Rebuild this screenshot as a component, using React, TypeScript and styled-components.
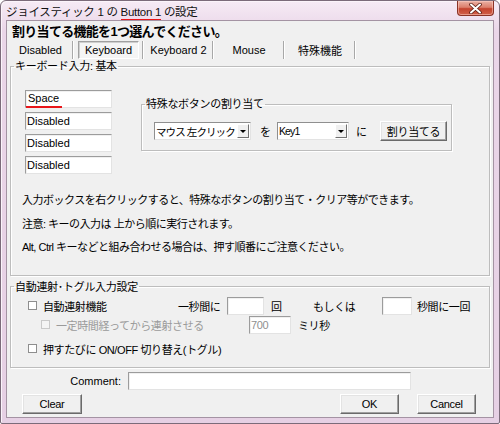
import React from 'react';
import styled, {createGlobalStyle} from 'styled-components';

const Global = createGlobalStyle`
  html, body { margin: 0; padding: 0; background: #fff; }
  body {
    font-family: "Liberation Sans", "Noto Sans CJK JP", sans-serif;
    font-size: 11px;
    color: #000;
  }
  * { box-sizing: border-box; }
`;

const Window = styled.div`
  width: 500px;
  height: 424px;
  display: flex;
  flex-direction: column;
  background: linear-gradient(#f6ebf5, #ead6e8 30px, #e6d0e4);
  border: 1px solid #7b6b7a;
  border-radius: 6px 6px 2px 2px;
  box-shadow: inset 1px 1px #fbf4fa;
`;

const TitleBar = styled.div`
  height: 19px;
  display: flex;
  align-items: flex-start;
  padding-left: 5px;
`;

const Title = styled.div`
  padding-top: 4px;
  font-size: 11.5px;
  line-height: 14px;
  letter-spacing: -0.3px;
  color: #111;
`;

const Mark = styled.span`
  border-bottom: 2px solid #e8161a;
  padding-bottom: 1px;
`;

const CloseBtn = styled.div`
  margin-left: auto;
  margin-right: 5px;
  width: 37px;
  height: 15px;
  display: flex;
  align-items: center;
  justify-content: center;
  border: 1px solid #8a3226;
  border-top: none;
  border-radius: 0 0 4px 4px;
  background: linear-gradient(#eab1a4, #dc7f6c 45%, #c4432e 55%, #d1604a);
  box-shadow: inset 0 0 0 1px rgba(255, 210, 200, 0.5);
`;

const Client = styled.div`
  flex: 1;
  margin: 0 5px 5px 5px;
  background: #f0f0f0;
  border: 1px solid #a493a3;
  padding: 0 3px;
  display: flex;
  flex-direction: column;
`;

const Heading = styled.div`
  margin: 1px 0 0 2px;
  height: 19px;
  line-height: 19px;
  font-size: 13px;
  font-weight: 700;
  letter-spacing: -0.7px;
`;

const TabBar = styled.div`
  display: flex;
  height: 18px;
  margin: 0 0 0 -3px;
`;

const TabCell = styled.div<{$w: number}>`
  width: ${p => p.$w}px;
  height: 18px;
  display: flex;
  align-items: stretch;
  border-right: 1px solid #a8a8a8;
  box-shadow: 1px 0 #fff;
  padding: 0 3px 0 5px;
`;

const TabLabel = styled.div<{$active?: boolean}>`
  flex: 1;
  display: flex;
  align-items: center;
  justify-content: center;
  white-space: nowrap;
  font-size: 11px;
  border: 1px solid transparent;
  ${p => p.$active && `
    border-color: #a0a0a0 #fff #fff #a0a0a0;
    box-shadow: inset 1px 1px #cfcfcf;
    background: #f5f5f5;
  `}
`;

const Group = styled.fieldset`
  margin: 0;
  padding: 0 0 0 3px;
  border: 1px solid #bdbdbd;
  box-shadow: 1px 1px #fff, inset 1px 1px #fff;
  min-width: 0;
`;

const Legend = styled.legend`
  padding: 0 1px;
  line-height: 14px;
  font-size: 11px;
  letter-spacing: -0.3px;
`;

const KeyBody = styled.div`
  padding: 17px 0 15px 11px;
`;

const KeyRow = styled.div`
  display: flex;
  align-items: flex-start;
`;

const KeyList = styled.div`
  width: 87px;
  display: flex;
  flex-direction: column;
  gap: 4px;
`;

const Field = styled.div<{$w?: number; $disabled?: boolean}>`
  width: ${p => (p.$w ? `${p.$w}px` : '100%')};
  height: 18px;
  background: #fff;
  border: 1px solid;
  border-color: #9c9c9c #e3e3e3 #e3e3e3 #9c9c9c;
  box-shadow: inset 1px 1px #f0f0f0;
  display: flex;
  align-items: center;
  padding-left: 1px;
  font-size: 11px;
  color: ${p => (p.$disabled ? '#8f8f8f' : '#000')};
  flex: none;
`;

const Underlined = styled.span`
  display: inline-block;
  align-self: flex-end;
  height: 17px;
  line-height: 15px;
  margin-left: -1px;
  margin-bottom: -1px;
  padding: 0 3px 0 2px;
  border-bottom: 2px solid #e8161a;
`;

const SpecialGroup = styled(Group)`
  margin: 7px 0 0 29px;
  width: 311px;
`;

const SpecialBody = styled.div`
  padding: 10px 0 9px 9px;
  display: flex;
  align-items: center;
`;

const Combo = styled.div<{$w: number}>`
  width: ${p => p.$w}px;
  height: 18px;
  background: #fff;
  border: 1px solid;
  border-color: #8f8f8f #e3e3e3 #e3e3e3 #8f8f8f;
  display: flex;
  align-items: center;
  font-size: 11px;
  padding-left: 1px;
`;

const ComboText = styled.span`
  flex: 1;
  white-space: nowrap;
  overflow: hidden;
  font-size: 10.5px;
  letter-spacing: -0.9px;
`;

const DropBtn = styled.span`
  width: 12px;
  height: 14px;
  margin-right: 1px;
  flex: none;
  background: #f0f0f0;
  border: 1px solid;
  border-color: #fff #707070 #707070 #fff;
  display: flex;
  align-items: center;
  justify-content: center;
  &::after {
    content: '';
    border-left: 3px solid transparent;
    border-right: 3px solid transparent;
    border-top: 3px solid #000;
  }
`;

const Word = styled.span<{$l: number; $r: number}>`
  margin: 0 ${p => p.$r}px 0 ${p => p.$l}px;
  font-size: 11px;
`;

const Button = styled.button<{$w: number; $h?: number}>`
  width: ${p => p.$w}px;
  height: ${p => p.$h ?? 20}px;
  padding: 0;
  font-family: inherit;
  font-size: 11px;
  letter-spacing: -0.3px;
  color: #000;
  background: #f0f0f0;
  border: 1px solid;
  border-color: #fff #6a6a6a #6a6a6a #fff;
  box-shadow: inset -1px -1px #a0a0a0, inset 1px 1px #e3e3e3;
`;

const Notes = styled.div`
  margin: 15px 0 0 -3px;
`;

const Note = styled.p`
  margin: 0;
  line-height: 23.5px;
  font-size: 11px;
  letter-spacing: -0.5px;
`;

const AutoGroup = styled(Group)`
  margin-top: 4px;
`;

const AutoBody = styled.div`
  padding: 3px 0 9px 14px;
  display: flex;
  flex-direction: column;
  gap: 1px;
`;

const OptRow = styled.div<{$indent?: number; $gap?: number}>`
  height: 18px;
  display: flex;
  align-items: center;
  padding-left: ${p => p.$indent ?? 0}px;
  margin-top: ${p => p.$gap ?? 0}px;
  font-size: 11px;
  letter-spacing: -0.4px;
`;

const Check = styled.span<{$disabled?: boolean}>`
  width: 9px;
  height: 9px;
  flex: none;
  background: ${p => (p.$disabled ? '#f4f4f4' : '#fff')};
  border: 1px solid ${p => (p.$disabled ? '#c9c9c9' : '#8e8e8e')};
  margin-right: 6px;
`;

const Cell = styled.span<{$w?: number; $l?: number; $grey?: boolean}>`
  ${p => (p.$w ? `width: ${p.$w}px; flex: none;` : '')}
  padding-left: ${p => p.$l ?? 0}px;
  color: ${p => (p.$grey ? '#9a9a9a' : '#000')};
  white-space: nowrap;
`;

const CommentRow = styled.div`
  margin-top: 5px;
  display: flex;
  align-items: center;
  height: 17px;
`;

const CommentLabel = styled.span`
  width: 111px;
  text-align: right;
  font-size: 11px;
  margin-right: 7px;
`;

const Footer = styled.div`
  margin-top: 4px;
  display: flex;
  align-items: center;
  padding: 0 14px 0 12px;
  gap: 18px;
`;

const Spacer = styled.div`
  flex: 1;
`;

const keys = ['Disabled', 'Disabled', 'Disabled'];

const tabs: {label: string; w: number; active?: boolean}[] = [
  {label: 'Disabled', w: 66},
  {label: 'Keyboard', w: 70, active: true},
  {label: 'Keyboard 2', w: 70},
  {label: 'Mouse', w: 71},
  {label: '特殊機能', w: 71},
];

const CloseIcon = () => (
  <svg width="13" height="11" viewBox="0 0 13 11">
    <path d="M2 1.5 L11 9.5 M11 1.5 L2 9.5" stroke="#5a1d14" strokeWidth="3.6" strokeLinecap="round"/>
    <path d="M2 1.5 L11 9.5 M11 1.5 L2 9.5" stroke="#fff" strokeWidth="2" strokeLinecap="round"/>
  </svg>
);

const App = () => {
  return (
    <>
      <Global/>
      <Window>
        <TitleBar>
          <Title>ジョイスティック 1 の <Mark>Button 1</Mark> の設定</Title>
          <CloseBtn><CloseIcon/></CloseBtn>
        </TitleBar>
        <Client>
          <Heading>割り当てる機能を1つ選んでください。</Heading>
          <TabBar>
            {tabs.map(t => (
              <TabCell key={t.label} $w={t.w}>
                <TabLabel $active={t.active}>{t.label}</TabLabel>
              </TabCell>
            ))}
          </TabBar>
          <Group>
            <Legend>キーボード入力: 基本</Legend>
            <KeyBody>
              <KeyRow>
                <KeyList>
                  <Field><Underlined>Space</Underlined></Field>
                  {keys.map((k, i) => <Field key={i}>{k}</Field>)}
                </KeyList>
                <SpecialGroup>
                  <Legend>特殊なボタンの割り当て</Legend>
                  <SpecialBody>
                    <Combo $w={97}><ComboText>マウス 左クリック</ComboText><DropBtn/></Combo>
                    <Word $l={9} $r={6}>を</Word>
                    <Combo $w={72}><ComboText>Key1</ComboText><DropBtn/></Combo>
                    <Word $l={7} $r={13}>に</Word>
                    <Button $w={67}>割り当てる</Button>
                  </SpecialBody>
                </SpecialGroup>
              </KeyRow>
              <Notes>
                <Note>入力ボックスを右クリックすると、特殊なボタンの割り当て・クリア等ができます。</Note>
                <Note>注意: キーの入力は 上から順に実行されます。</Note>
                <Note>Alt, Ctrl キーなどと組み合わせる場合は、押す順番にご注意ください。</Note>
              </Notes>
            </KeyBody>
          </Group>
          <AutoGroup>
            <Legend>自動連射･トグル入力設定</Legend>
            <AutoBody>
              <OptRow>
                <Check/>
                <Cell $w={135}>自動連射機能</Cell>
                <Cell $w={49}>一秒間に</Cell>
                <Field $w={37}/>
                <Cell $w={49} $l={7}>回</Cell>
                <Cell $w={69}>もしくは</Cell>
                <Field $w={30}/>
                <Cell $l={5}>秒間に一回</Cell>
              </OptRow>
              <OptRow $indent={13}>
                <Check $disabled/>
                <Cell $w={193} $grey>一定時間経ってから連射させる</Cell>
                <Field $w={42} $disabled>700</Field>
                <Cell $l={7}>ミリ秒</Cell>
              </OptRow>
              <OptRow $gap={5}>
                <Check/>
                <Cell>押すたびに ON/OFF 切り替え(トグル)</Cell>
              </OptRow>
            </AutoBody>
          </AutoGroup>
          <CommentRow>
            <CommentLabel>Comment:</CommentLabel>
            <Field $w={283}/>
          </CommentRow>
          <Footer>
            <Button $w={60}>Clear</Button>
            <Spacer/>
            <Button $w={59}>OK</Button>
            <Button $w={59}>Cancel</Button>
          </Footer>
        </Client>
      </Window>
    </>
  );
};

export default App;
